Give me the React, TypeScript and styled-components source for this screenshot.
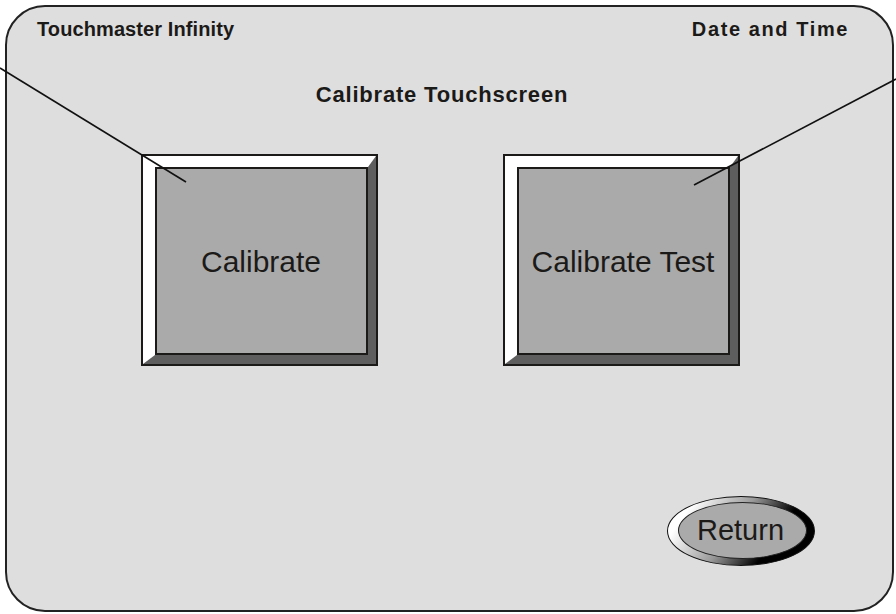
import React from 'react';
import styled, { createGlobalStyle } from 'styled-components';

const GlobalStyle = createGlobalStyle`
  html, body {
    margin: 0;
    padding: 0;
    background: #ffffff;
  }
  body {
    font-family: "Liberation Sans", Arial, sans-serif;
    color: #1c1a18;
  }
  * {
    box-sizing: border-box;
  }
`;

const Page = styled.div`
  position: relative;
  width: 896px;
  height: 614px;
  padding: 5px 2px 2px 5px;
`;

const Panel = styled.div`
  width: 889px;
  height: 607px;
  border: 2px solid #222;
  border-radius: 40px;
  background: #dedede;
  display: flex;
  flex-direction: column;
  padding: 12px 43px 0 30px;
`;

const Header = styled.div`
  display: flex;
  justify-content: space-between;
  align-items: flex-start;
`;

const Title = styled.div<{ $spacing: number; $size: number }>`
  font-weight: bold;
  font-size: ${(p) => p.$size}px;
  line-height: 1;
  letter-spacing: ${(p) => p.$spacing}px;
`;

const Content = styled.div`
  display: flex;
  flex-direction: column;
  align-items: center;
  padding-right: 6px;
`;

const Subtitle = styled.div`
  margin-top: 45px;
  font-weight: bold;
  font-size: 22px;
  line-height: 1;
  letter-spacing: 0.8px;
  margin-left: 4px;
`;

const ButtonRow = styled.div`
  display: flex;
  gap: 129px;
  margin-top: 50px;
`;

const BevelButton = styled.div`
  width: 233px;
  height: 208px;
  border-style: solid;
  border-width: 11px 8px 9px 12px;
  border-color: #ffffff #5e5e5e #5e5e5e #ffffff;
  box-shadow: 0 0 0 2px #1c1a18;
  display: flex;
`;

const Face = styled.div`
  flex: 1;
  background: #aaaaaa;
  border: 2px solid #1c1a18;
  display: flex;
  align-items: center;
  justify-content: center;
  font-size: 30px;
  color: #1c1a18;
  padding-top: 2px;
`;

const Footer = styled.div`
  display: flex;
  justify-content: flex-end;
  margin-top: 132px;
  padding-right: 34px;
`;

const OvalButton = styled.div`
  width: 148px;
  height: 70px;
  border-radius: 50%;
  border: 1px solid #111;
  background: linear-gradient(125deg, #ffffff 15%, #9a9a9a 45%, #000000 70%);
  padding: 5px 7px 6px 10px;
  display: flex;
`;

const OvalFace = styled.div`
  flex: 1;
  border-radius: 50%;
  background: #aaaaaa;
  border: 1px solid #222;
  display: flex;
  align-items: center;
  justify-content: center;
  font-size: 29px;
  color: #1c1a18;
  padding-right: 4px;
`;

const Callouts = styled.svg`
  position: absolute;
  left: 0;
  top: 0;
  pointer-events: none;
`;

export default function App() {
  return (
    <Page>
      <GlobalStyle />
      <Panel>
        <Header>
          <Title $size={20} $spacing={0.1}>Touchmaster Infinity</Title>
          <Title $size={20} $spacing={1.6}>Date and Time</Title>
        </Header>
        <Content>
          <Subtitle>Calibrate Touchscreen</Subtitle>
          <ButtonRow>
            <BevelButton>
              <Face>Calibrate</Face>
            </BevelButton>
            <BevelButton>
              <Face>Calibrate Test</Face>
            </BevelButton>
          </ButtonRow>
        </Content>
        <Footer>
          <OvalButton>
            <OvalFace>Return</OvalFace>
          </OvalButton>
        </Footer>
      </Panel>
      <Callouts width="896" height="614" viewBox="0 0 896 614">
        <line x1="0" y1="68" x2="186" y2="182" stroke="#111" strokeWidth="1.6" />
        <line x1="896" y1="79" x2="694" y2="185" stroke="#111" strokeWidth="1.6" />
      </Callouts>
    </Page>
  );
}
